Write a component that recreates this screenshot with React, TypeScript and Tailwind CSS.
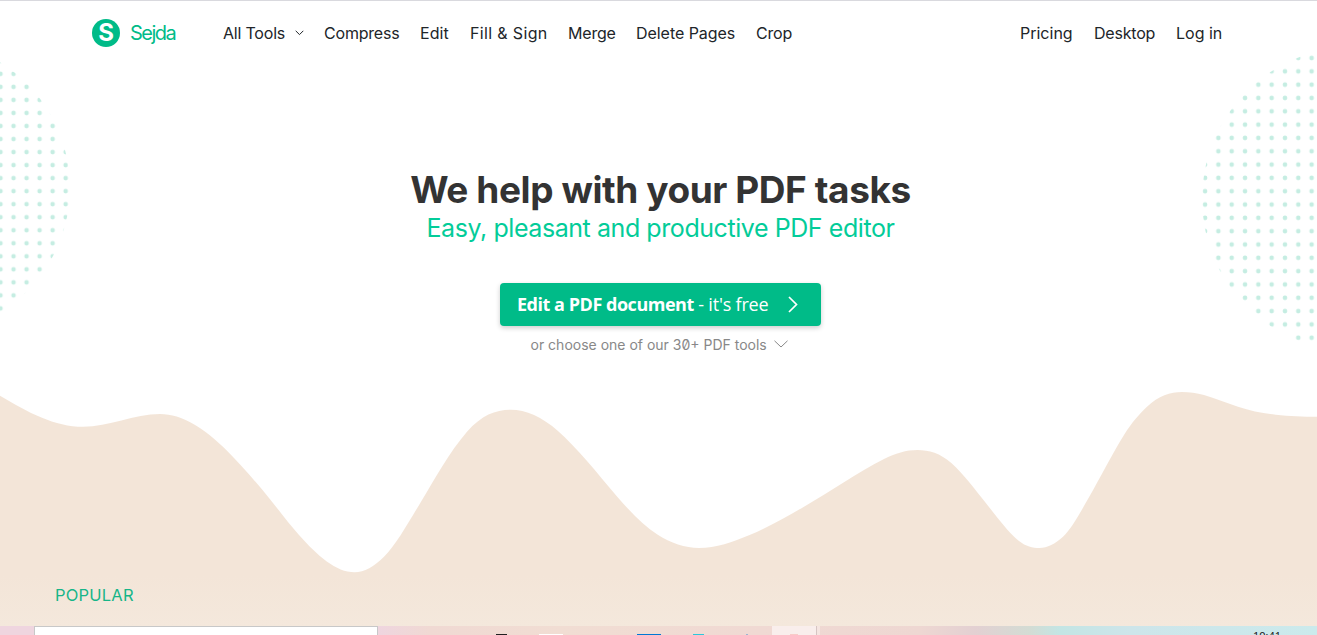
import React from "react";

type NavItem = {
  label: string;
  className: string;
};

const toolLinks: NavItem[] = [
  { label: "Compress", className: "w-[75px] mr-[21px] tracking-[-0.2px]" },
  { label: "Edit", className: "w-[29px] mr-[21px] tracking-[0.1px]" },
  { label: "Fill & Sign", className: "w-[78px] mr-[20px] tracking-[0.35px]" },
  { label: "Merge", className: "w-[48px] mr-[20px] tracking-[-0.2px]" },
  { label: "Delete Pages", className: "w-[99px] mr-[21px] tracking-[-0.05px]" },
  { label: "Crop", className: "w-[36px] tracking-[-0.2px]" },
];

const accountLinks: NavItem[] = [
  { label: "Pricing", className: "w-[53px] mr-[21px]" },
  { label: "Desktop", className: "w-[61px] mr-[21px] tracking-[-0.2px]" },
  { label: "Log in", className: "w-[47px]" },
];

// x, y, slope
const waveKnots = [
  [0, 395.7, 0.6],
  [83, 426.8, 0],
  [160, 414, 0],
  [227, 450.7, 1.0],
  [269, 498, 1.22],
  [299, 535, 1.12],
  [354.5, 572.3, 0],
  [384, 556.7, -1.0],
  [421, 501.7, -1.65],
  [442, 466.7, -1.6],
  [467, 431.7, -1.15],
  [510.5, 409.7, 0],
  [557.7, 430.7, 0.88],
  [587, 461, 1.13],
  [616.6, 496, 1.15],
  [657, 534.3, 0.65],
  [699, 548, 0],
  [749.6, 535, -0.42],
  [804, 506.7, -0.57],
  [884, 459, -0.5],
  [917.5, 450, 0],
  [951.6, 463.3, 0.9],
  [987.4, 505, 1.25],
  [1019, 541, 0.8],
  [1039.5, 548, 0],
  [1063, 536.7, -0.9],
  [1088.4, 498.3, -1.75],
  [1124, 435, -1.6],
  [1147, 406.7, -0.95],
  [1182, 392, 0],
  [1204, 395, 0.28],
  [1238, 406.7, 0.32],
  [1275.7, 414.7, 0.1],
  [1317, 416.7, 0],
];

function wavePath() {
  let d = `M0 ${waveKnots[0][1]}`;
  for (let i = 1; i < waveKnots.length; i++) {
    const [x0, y0, s0] = waveKnots[i - 1];
    const [x1, y1, s1] = waveKnots[i];
    const h = (x1 - x0) / 3;
    d += ` C${x0 + h} ${y0 + s0 * h} ${x1 - h} ${y1 - s1 * h} ${x1} ${y1}`;
  }
  return `${d} V626 H0 Z`;
}

function Backdrop() {
  return (
    <svg className="absolute inset-0 w-[1317px] h-[626px]" viewBox="0 0 1317 626" aria-hidden="true">
      <defs>
        <pattern id="dots-left" x="-6" y="67.4" width="13.03" height="13.03" patternUnits="userSpaceOnUse">
          <circle cx="6.5" cy="6.5" r="2.3" fill="#c5ede2" />
        </pattern>
        <pattern id="dots-right" x="1198.4" y="51.4" width="13.32" height="13.32" patternUnits="userSpaceOnUse">
          <circle cx="6.66" cy="6.66" r="2.3" fill="#c5ede2" />
        </pattern>
        <linearGradient id="sand" x1="0" y1="0" x2="0" y2="626" gradientUnits="userSpaceOnUse">
          <stop offset="0.92" stopColor="#f3e5d8" />
          <stop offset="1" stopColor="#f4e8dc" />
        </linearGradient>
      </defs>
      <circle cx="-77" cy="187.5" r="147" fill="url(#dots-left)" />
      <circle cx="1354" cy="199" r="152" fill="url(#dots-right)" />
      <path d={wavePath()} fill="url(#sand)" />
    </svg>
  );
}

function NavLinks({ items }: { items: NavItem[] }) {
  return (
    <>
      {items.map((item) => (
        <a key={item.label} href="#" className={`whitespace-nowrap ${item.className}`}>
          {item.label}
        </a>
      ))}
    </>
  );
}

function Header() {
  return (
    <header className="relative flex items-center h-[65px] pl-[92px] pr-[94px] border-t border-[#d9d9de] text-[16px] text-[#212529]">
      <a href="#" className="flex items-center w-[131px] text-[#00bb88]">
        <span className="flex items-center justify-center w-[28px] h-[28px] mr-[10px] rounded-full bg-[#00bb88] text-white text-[24px] font-bold leading-none">
          S
        </span>
        <span className="text-[20px] tracking-[-1.5px]">Sejda</span>
      </a>
      <nav className="flex items-center flex-1">
        <a href="#" className="flex items-center w-[101px] whitespace-nowrap">
          <span className="w-[72px] tracking-[-0.2px]">All Tools</span>
          <svg className="w-[9px] h-[6px]" viewBox="0 0 9 6" fill="none" stroke="currentColor">
            <path d="M0.7 0.8 L4.5 4.6 L8.3 0.8" />
          </svg>
        </a>
        <NavLinks items={toolLinks} />
      </nav>
      <nav className="flex items-center">
        <NavLinks items={accountLinks} />
      </nav>
    </header>
  );
}

function Hero() {
  return (
    <section className="relative flex flex-col items-center h-[517px] pt-[103px] pl-[4px]">
      <h1 className="text-[37px] leading-[44px] font-bold tracking-[-0.42px] text-[#333333] whitespace-nowrap">We help with your PDF tasks</h1>
      <h2 className="text-[25px] leading-[32px] tracking-[-0.43px] text-[#03cc99] whitespace-nowrap">Easy, pleasant and productive PDF editor</h2>
      <button className="flex items-center w-[321px] h-[43px] mt-[39px] pl-[17px] rounded-[4px] bg-[#00bb88] text-white text-[18px] font-['Open_Sans',sans-serif] whitespace-nowrap shadow-[0_2px_5px_rgba(0,0,0,0.2)]">
        <span className="w-[271px] text-left tracking-[-0.2px]">
          <b className="font-bold tracking-[-0.47px]">Edit a PDF document</b> - it's free
        </span>
        <svg className="w-[10px] h-[17px]" viewBox="0 0 10 17" fill="none" stroke="currentColor" strokeWidth="1.7">
          <path d="M1 1 L8.5 8.5 L1 16" />
        </svg>
      </button>
      <a href="#" className="flex items-center mt-[8px] mr-[3px] h-[20px] text-[14px] text-[#888888] whitespace-nowrap">
        <span className="w-[243px] slashed-zero">or choose one of our 30+ PDF tools</span>
        <svg className="w-[14px] h-[8px]" viewBox="0 0 14 8" fill="none" stroke="currentColor">
          <path d="M0.5 0.8 L7 7 L13.5 0.8" />
        </svg>
      </a>
    </section>
  );
}

function Taskbar() {
  return (
    <footer className="relative flex h-[9px] overflow-hidden bg-[linear-gradient(90deg,#efd5df_0,#efd5df_378px,#f0d9d3_430px,#f1ddd3_560px,#f0d9d3_760px,#eed7d2_920px,#e3d0d2_975px,#d3dcd4_1030px,#c3e5e4_1060px,#cde5ea_1130px,#cbeaec_1317px)]">
      <div className="w-[344px] ml-[34px] border border-b-0 border-[#c8c8c8] bg-white" />
      <div className="flex items-end flex-1">
        <span className="w-[11px] h-px ml-[118px] bg-[#202020]" />
        <span className="w-[24px] h-px ml-[32px] bg-white" />
        <span className="w-[24px] h-px ml-[74px] bg-[#0078d4]" />
        <span className="w-[11px] h-px ml-[32px] bg-[#2bc8dc]" />
        <span className="w-[2px] h-px ml-[42px] bg-[#9eb4d2]" />
        <span className="flex items-end justify-center w-[45px] h-[9px] ml-[24px] border-r border-[#d6c5c3] bg-[#f9eeec]">
          <span className="w-[8px] h-px bg-[#f8cbc8]" />
        </span>
        <span className="w-[3px] h-[9px] bg-[#f5e5e1]" />
        <span className="self-start mt-[3px] ml-[433px] text-[11px] leading-[14px] text-[#101010] font-['Open_Sans',sans-serif]">10:41</span>
      </div>
    </footer>
  );
}

export default function App() {
  return (
    <div className="relative w-[1317px] h-[635px] overflow-hidden bg-white font-[Inter,sans-serif]">
      <Backdrop />
      <Header />
      <Hero />
      <section className="relative h-[44px] pl-[55px]">
        <h3 className="text-[16.5px] leading-[26px] tracking-[0.2px] text-[#17b588]">POPULAR</h3>
      </section>
      <Taskbar />
    </div>
  );
}
